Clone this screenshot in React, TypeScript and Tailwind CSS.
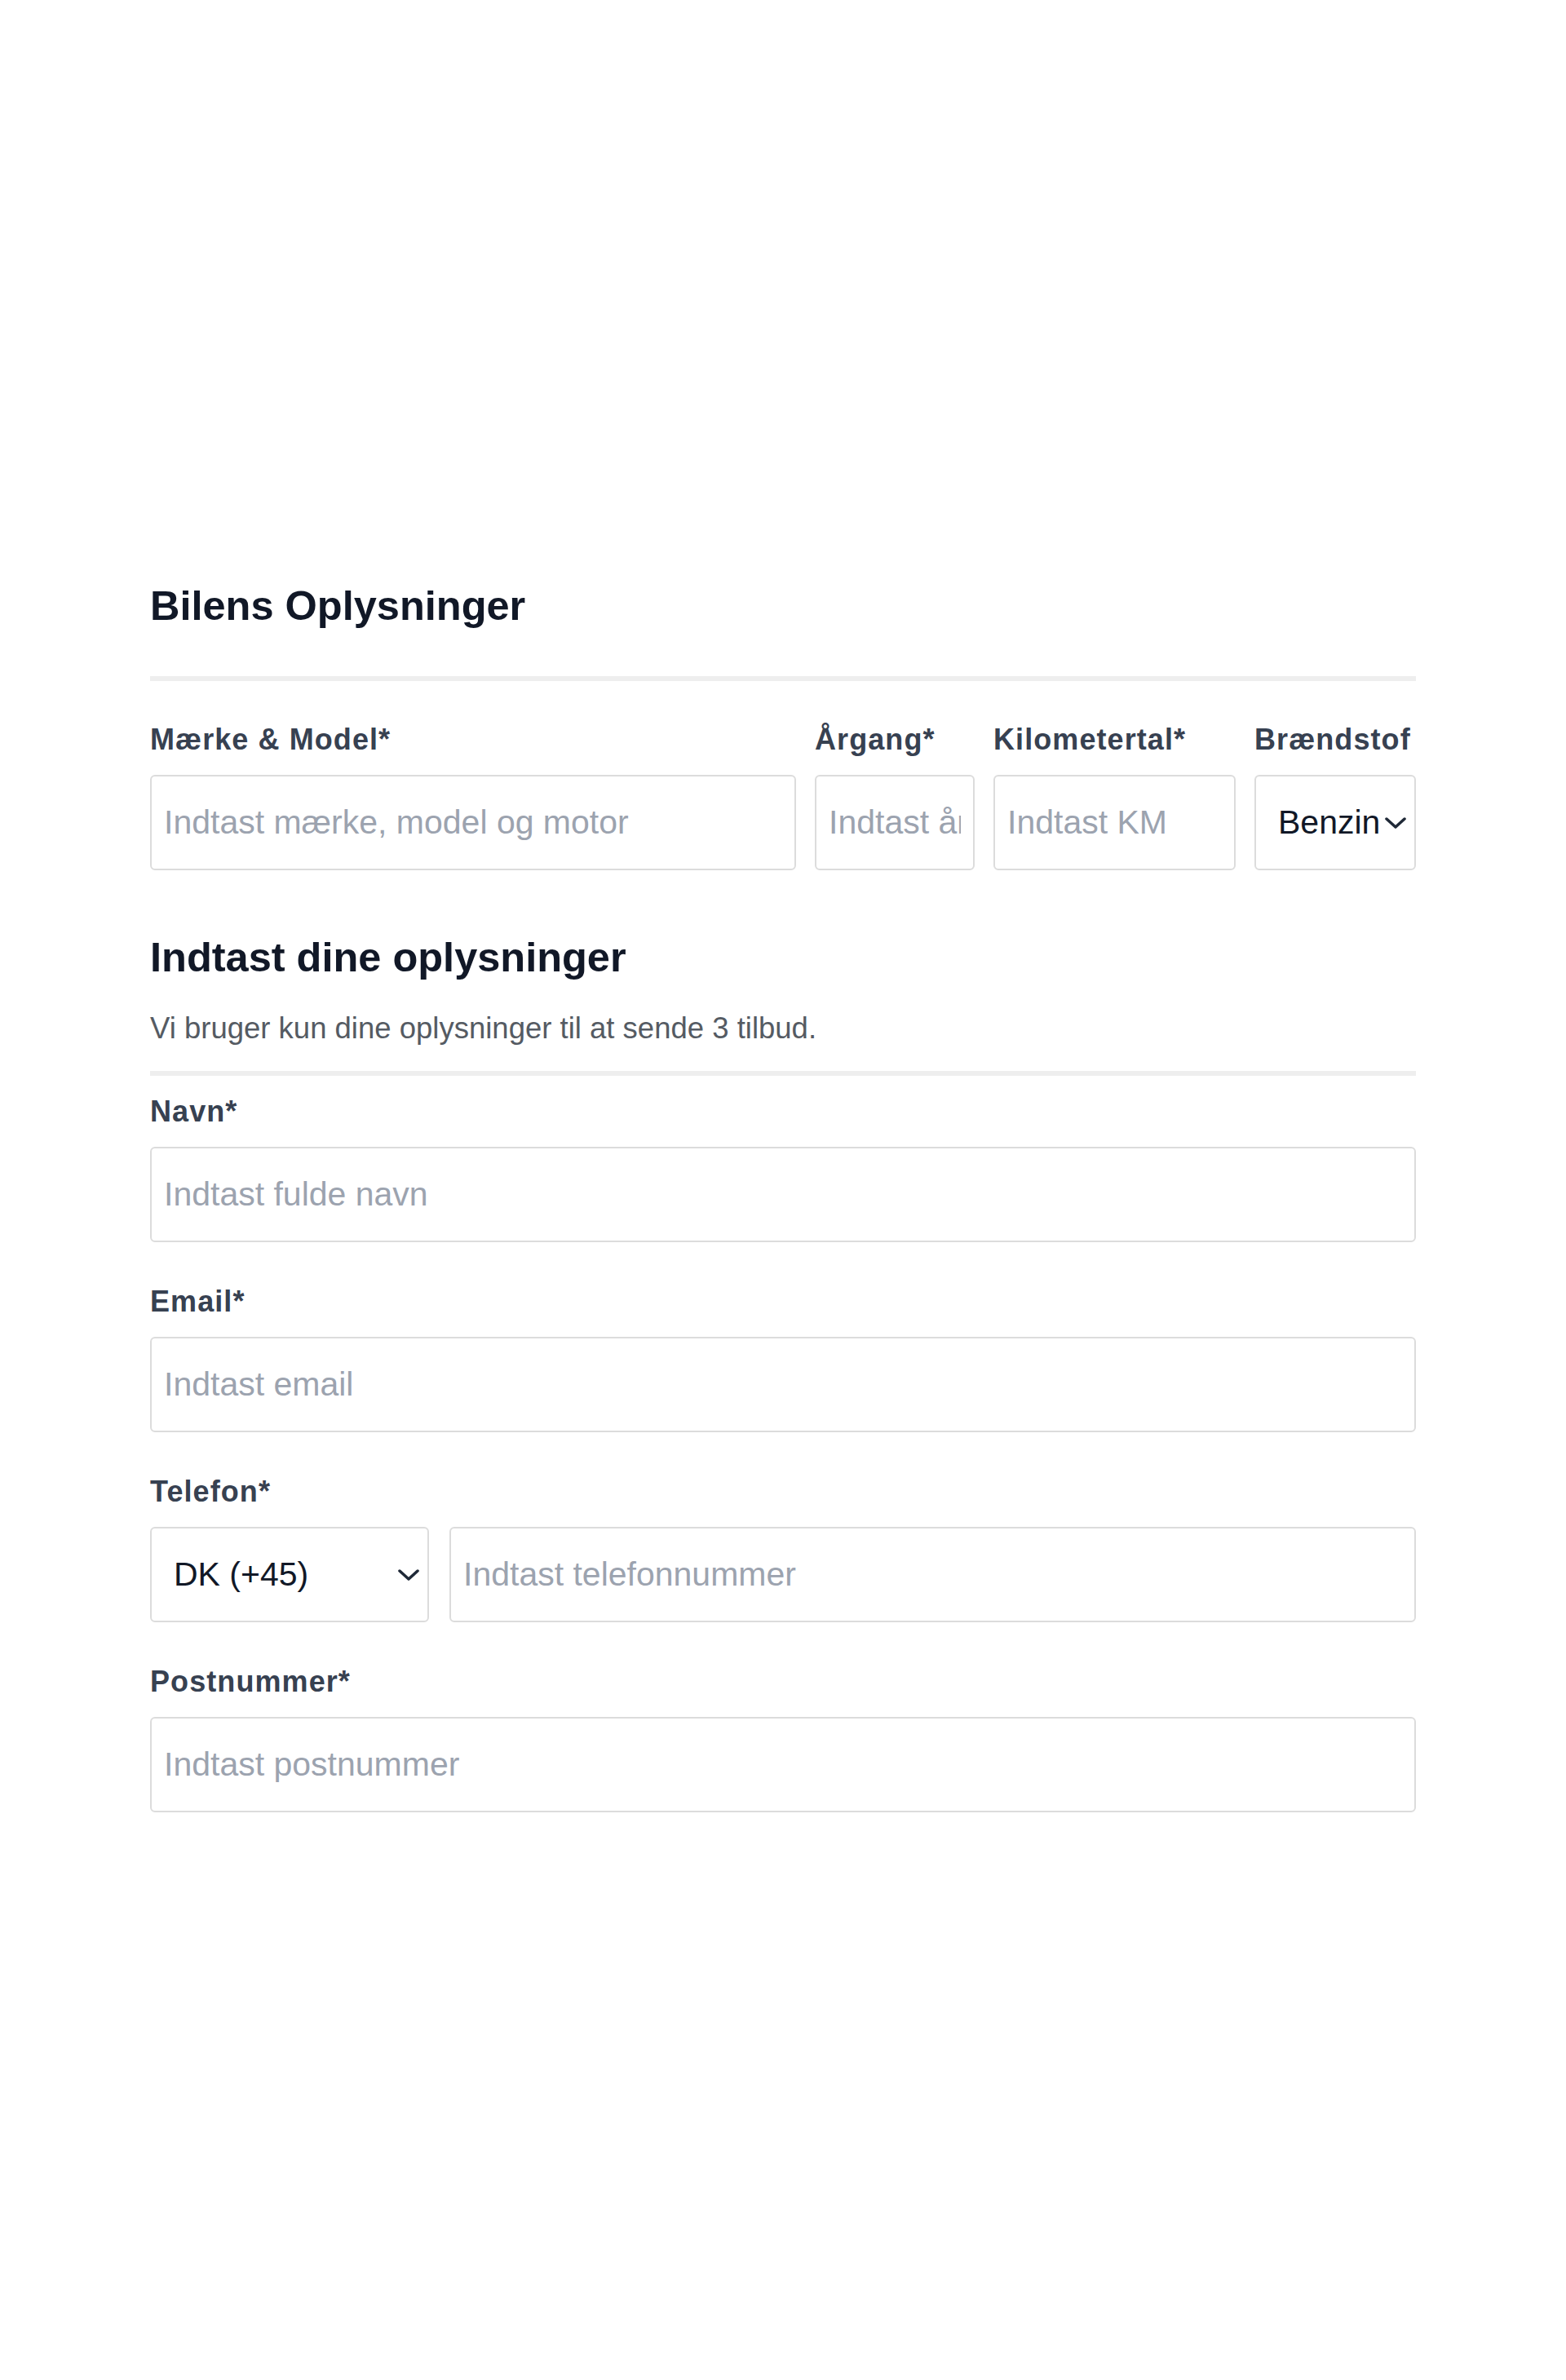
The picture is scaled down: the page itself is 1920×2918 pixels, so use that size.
import { useState } from 'react';

type FieldProps = {
  label: string;
  children: React.ReactNode;
};

const inputClass =
  'block h-[117px] w-full rounded-[6px] border-2 border-[#dcdcdc] bg-white px-[15px] text-[41px] text-[#111827] outline-none placeholder:text-[#9ca3af]';

const Chevron = () => (
  <svg
    className="pointer-events-none absolute right-[12px] top-1/2 -translate-y-1/2"
    width="26"
    height="16"
    viewBox="0 0 26 16"
    fill="none"
  >
    <polyline points="2,3 13,13 24,3" stroke="#1f2937" strokeWidth="3.5" strokeLinecap="round" strokeLinejoin="round" />
  </svg>
);

const Label = ({ children }: { children: React.ReactNode }) => (
  <label className="block whitespace-nowrap text-[36px] leading-[43px] font-bold tracking-[0.03em] text-[#374151]">
    {children}
  </label>
);

const Field = ({ label, children }: FieldProps) => (
  <div className="flex flex-col gap-[22px]">
    <Label>{label}</Label>
    {children}
  </div>
);

const Select = ({ value, options, onChange }: { value: string; options: string[]; onChange: (v: string) => void }) => (
  <div className="relative">
    <select
      value={value}
      onChange={(e) => onChange(e.target.value)}
      className="block h-[117px] w-full appearance-none rounded-[6px] border-2 border-[#dcdcdc] bg-white pl-[27px] pr-[40px] text-[41px] text-[#111827] outline-none"
    >
      {options.map((o) => (
        <option key={o}>{o}</option>
      ))}
    </select>
    <Chevron />
  </div>
);

export default function App() {
  const [fuel, setFuel] = useState('Benzin');
  const [country, setCountry] = useState('DK (+45)');

  return (
    <div className="min-h-screen bg-white font-['Liberation_Sans',Arial,sans-serif]">
      <div className="mx-auto w-[1552px] pt-[713px] pb-[600px]">
        <h2 className="text-[50.5px] leading-[60px] font-bold text-[#111827]">Bilens Oplysninger</h2>
        <div className="mt-[56px] h-[6px] bg-[#eeeeee]" />

        <div className="mt-[50px] grid grid-cols-[1fr_196px_297px_198px] gap-x-[23px]">
          <Field label="Mærke & Model*">
            <input className={inputClass} placeholder="Indtast mærke, model og motor" />
          </Field>
          <Field label="Årgang*">
            <input className={inputClass} placeholder="Indtast år" />
          </Field>
          <Field label="Kilometertal*">
            <input className={inputClass} placeholder="Indtast KM" />
          </Field>
          <Field label="Brændstof">
            <Select value={fuel} onChange={setFuel} options={['Benzin', 'Diesel', 'El', 'Hybrid']} />
          </Field>
        </div>

        <h2 className="mt-[77px] text-[50.5px] leading-[60px] font-bold text-[#111827]">Indtast dine oplysninger</h2>
        <p className="mt-[35px] text-[36.5px] leading-[44px] text-[#555b63]">
          Vi bruger kun dine oplysninger til at sende 3 tilbud.
        </p>
        <div className="mt-[30px] h-[6px] bg-[#eeeeee]" />

        <div className="mt-[22px] flex flex-col gap-[51px]">
          <Field label="Navn*">
            <input className={inputClass} placeholder="Indtast fulde navn" />
          </Field>
          <Field label="Email*">
            <input className={inputClass} type="email" placeholder="Indtast email" />
          </Field>
          <Field label="Telefon*">
            <div className="flex gap-[25px]">
              <div className="w-[342px] shrink-0">
                <Select value={country} onChange={setCountry} options={['DK (+45)', 'SE (+46)', 'NO (+47)', 'DE (+49)']} />
              </div>
              <input className={inputClass} type="tel" placeholder="Indtast telefonnummer" />
            </div>
          </Field>
          <Field label="Postnummer*">
            <input className={inputClass} placeholder="Indtast postnummer" />
          </Field>
        </div>
      </div>
    </div>
  );
}
